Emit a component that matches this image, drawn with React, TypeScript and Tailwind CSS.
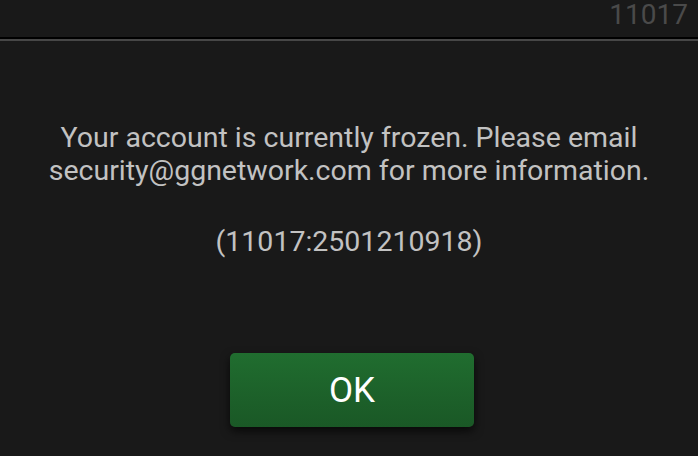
import React from 'react';

const App: React.FC = () => {
  return (
    <div className="h-[456px] w-[698px] overflow-hidden bg-[#191919] font-['Roboto',sans-serif]">
      <div className="flex h-[37px] items-start justify-end pr-[10px] pt-[1px]">
        <span className="text-[28px] leading-none text-[#4a4a4a]">11017</span>
      </div>
      <div className="h-[2px] bg-black" />
      <div className="h-[2px] bg-[#474747]" />

      <div className="flex flex-col items-center pt-[80px] text-center text-[28.5px] leading-[33px] text-[#c2c2c2]">
        <p>
          Your account is currently frozen. Please email
          <br />
          security@ggnetwork.com for more information.
        </p>
        <p className="mt-[38px]">(11017:2501210918)</p>

        <button className="ml-[6px] mt-[95px] flex h-[74px] w-[244px] items-center justify-center rounded-[5px] bg-gradient-to-b from-[#206d2f] to-[#1a5826] text-[35px] text-white shadow-[0_4px_10px_rgba(0,0,0,0.7)]">
          OK
        </button>
      </div>
    </div>
  );
};

export default App;
